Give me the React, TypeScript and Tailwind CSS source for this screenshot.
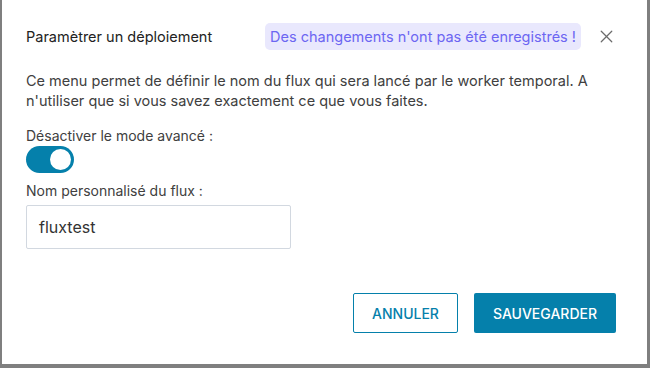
import { X } from "lucide-react";

function Toggle({ on }: { on: boolean }) {
  return (
    <div
      className={
        "w-[48px] h-[27px] rounded-full flex items-center px-[3px] " +
        (on ? "bg-[#0580ab] justify-end" : "bg-[#c4c4c4] justify-start")
      }
    >
      <div className="w-[21px] h-[21px] rounded-full bg-white" />
    </div>
  );
}

export default function App() {
  return (
    <div className="w-[650px] h-[368px] bg-[#7f7f7f] pl-[2px] pr-[3px] pb-[4px] flex">
      <div
        className="flex-1 bg-white flex flex-col pl-[24px] pr-[31px] pt-[23px] text-[#3d3d3d]"
        style={{ fontFamily: "Inter, 'Noto Sans', sans-serif" }}
      >
        {/* Header */}
        <div className="flex items-center h-[27px]">
          <h2 className="text-[14.5px] text-[#222] font-normal">Paramètrer un déploiement</h2>
          <span className="ml-auto h-[27px] flex items-center rounded-[5px] bg-[#e9e8fd] text-[#6c66f2] text-[14.5px] px-[5px]">
            Des changements n'ont pas été enregistrés !
          </span>
          <button className="ml-[15px] mr-[-1px] text-[#6b6b6b]">
            <X size={21} strokeWidth={1.4} />
          </button>
        </div>

        {/* Body */}
        <p className="mt-[21px] text-[14.5px] leading-[20px] text-[#404040]">
          Ce menu permet de définir le nom du flux qui sera lancé par le worker temporal. A
          n'utiliser que si vous savez exactement ce que vous faites.
        </p>

        <label className="mt-[16px] text-[14px] leading-[18px] text-[#404040]">Désactiver le mode avancé :</label>
        <div className="mt-[1px]">
          <Toggle on />
        </div>

        <label className="mt-[9px] text-[14px] leading-[18px] text-[#404040]">Nom personnalisé du flux :</label>
        <div className="mt-[5px] w-[265px] h-[44px] border border-[#d2d8e0] rounded-[2px] flex items-center px-[12px] text-[16px] text-[#333]">
          fluxtest
        </div>

        {/* Footer */}
        <div className="mt-auto mb-[31px] flex justify-end gap-[16px]">
          <button className="w-[105px] h-[40px] border border-[#0580ab] rounded-[2px] text-[#0580ab] text-[14px] font-medium">
            ANNULER
          </button>
          <button className="w-[142px] h-[40px] bg-[#0580ab] rounded-[2px] text-white text-[14px] font-medium">
            SAUVEGARDER
          </button>
        </div>
      </div>
    </div>
  );
}
